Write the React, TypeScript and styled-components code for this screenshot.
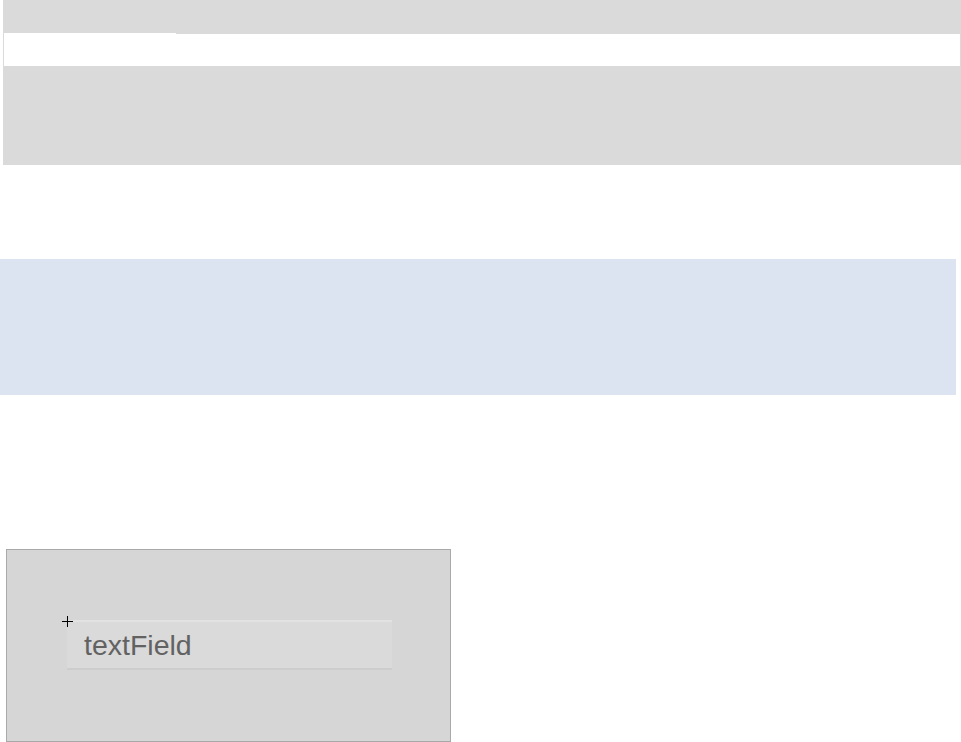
import styled, { createGlobalStyle } from 'styled-components';

const GlobalStyle = createGlobalStyle`
  html, body {
    margin: 0;
    padding: 0;
    background: #ffffff;
    font-family: "Liberation Sans", Arial, sans-serif;
  }
`;

const App = () => {
  return (
    <Page>
      <GlobalStyle />
      <TopPanel>
        <TabStrip>
          <ActiveTab />
          <TabFiller />
        </TabStrip>
      </TopPanel>
      <InfoBand />
      <FieldPanel>
        <FieldWrap>
          <Crosshair width="11" height="11" viewBox="0 0 11 11">
            <path d="M5.5 0V11M0 5.5H11" stroke="#000" strokeWidth="1" />
          </Crosshair>
          <TextField>textField</TextField>
        </FieldWrap>
      </FieldPanel>
    </Page>
  );
};

export default App;

const Page = styled.div`
  width: 961px;
  height: 742px;
  display: flex;
  flex-direction: column;
  overflow: hidden;
`;

const TopPanel = styled.div`
  margin-left: 3px;
  width: 958px;
  height: 165px;
  padding: 33px 1px 0 1px;
  box-sizing: border-box;
  background: #dadada;
`;

const TabStrip = styled.div`
  display: flex;
  height: 33px;
`;

const ActiveTab = styled.div`
  width: 172px;
  height: 33px;
  background: #ffffff;
`;

const TabFiller = styled.div`
  flex: 1;
  margin-top: 1px;
  background: #ffffff;
`;

const InfoBand = styled.div`
  margin-top: 94px;
  width: 956px;
  height: 136px;
  background: #dbe4f0;
`;

const FieldPanel = styled.div`
  margin: 154px 0 0 6px;
  width: 445px;
  height: 193px;
  box-sizing: border-box;
  border: 1px solid #a9a9a9;
  background: #d6d6d6;
  padding: 70px 0 0 60px;
`;

const FieldWrap = styled.div`
  position: relative;
  width: 325px;
`;

const Crosshair = styled.svg`
  position: absolute;
  left: -5px;
  top: -4px;
  display: block;
`;

const TextField = styled.div`
  height: 50px;
  box-sizing: border-box;
  border-top: 2px solid #e2e2e2;
  border-bottom: 2px solid #cdcdcd;
  background: #dadada;
  padding-left: 17px;
  display: flex;
  align-items: center;
  font-size: 28.5px;
  color: #626262;
`;
